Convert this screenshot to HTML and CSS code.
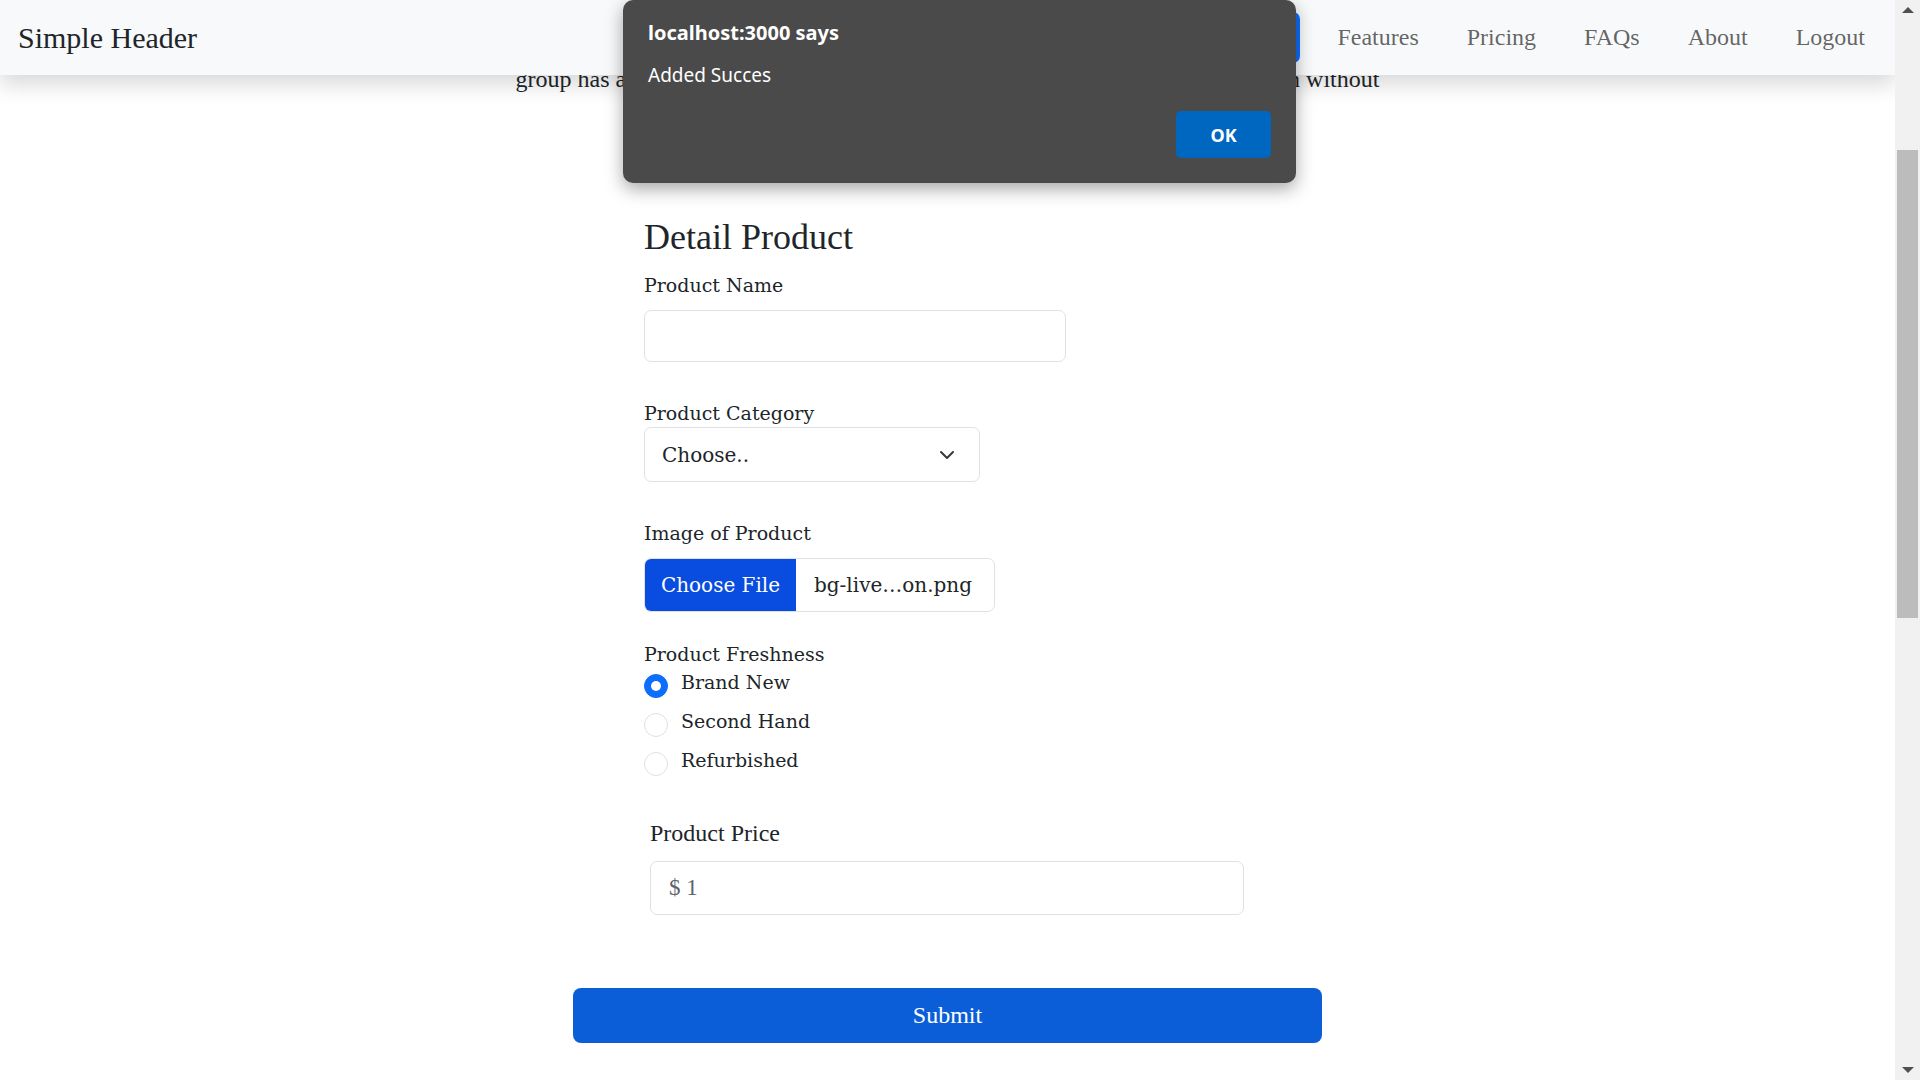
FILE: index.html
```html
<!DOCTYPE html>
<html lang="en">
<head>
<meta charset="utf-8">
<title>Simple Header</title>
<link rel="stylesheet" href="styles.css">
</head>
<body>
<div class="window">
  <div class="viewport">
    <main class="page">
      <p class="lead">group has a high enough contrast ratio so that the whole text is also readable even without</p>
      <form class="form">
        <div class="fields">
          <h4 class="title">Detail Product</h4>
          <label class="label first">Product Name</label>
          <div class="input name-input"></div>

          <label class="label gap">Product Category</label>
          <div class="select">
            <span class="select-text">Choose..</span>
            <svg class="chevron" width="16" height="16" viewBox="0 0 16 16"><path d="M2 5l6 6 6-6" fill="none" stroke="#343a40" stroke-width="2" stroke-linecap="round" stroke-linejoin="round"/></svg>
          </div>

          <label class="label gap">Image of Product</label>
          <div class="file">
            <span class="file-btn">Choose File</span>
            <span class="file-name">bg-live…on.png</span>
          </div>

          <label class="label gap-sm">Product Freshness</label>
          <div class="radios">
            <div class="radio-row"><span class="radio checked"></span><span class="radio-label">Brand New</span></div>
            <div class="radio-row"><span class="radio"></span><span class="radio-label">Second Hand</span></div>
            <div class="radio-row"><span class="radio"></span><span class="radio-label">Refurbished</span></div>
          </div>
        </div>

        <div class="price">
          <label class="price-label">Product Price</label>
          <div class="input price-input"><span class="price-value">$ 1</span></div>
        </div>

        <button type="button" class="submit">Submit</button>
      </form>
    </main>

    <header class="topbar">
      <span class="brand">Simple Header</span>
      <nav class="nav">
        <a class="nav-link active">Home</a>
        <a class="nav-link">Features</a>
        <a class="nav-link">Pricing</a>
        <a class="nav-link">FAQs</a>
        <a class="nav-link">About</a>
        <a class="nav-link">Logout</a>
      </nav>
    </header>

    <div class="dialog">
      <div class="dialog-title">localhost:3000 says</div>
      <div class="dialog-msg">Added Succes</div>
      <div class="dialog-actions"><span class="ok">OK</span></div>
    </div>
  </div>

  <div class="scrollbar">
    <span class="arrow up"></span>
    <div class="track"><div class="thumb"></div></div>
    <span class="arrow down"></span>
  </div>
</div>
</body>
</html>
```

FILE: styles.css
```css
* { box-sizing: border-box; }
html, body { margin: 0; padding: 0; height: 100%; overflow: hidden; }
body { background: #fff; font-family: "Liberation Serif", "Times New Roman", serif; color: #212529; }

.window { display: flex; height: 1080px; width: 1920px; }
.viewport { position: relative; flex: 1; overflow: hidden; background: #fff; }

/* header */
.topbar {
  position: absolute; top: 0; left: 0; right: 0;
  height: 75px;
  background: #f8f9fa;
  box-shadow: 0 10px 20px rgba(0,0,0,0.15);
  display: flex; align-items: center; justify-content: space-between;
  padding: 0 6px 0 18px;
  z-index: 2;
}
.brand { font-size: 30px; color: #212529; }
.nav { display: flex; align-items: center; }
.nav-link {
  font-size: 24px; color: rgba(0,0,0,0.62);
  padding: 0 24px; height: 51px; display: flex; align-items: center;
  border-radius: 7px;
}
.nav-link.active { background: #0d6efd; color: #fff; margin-right: 13px; }

/* page */
.page { padding-top: 61px; }
.lead { margin: 0; font-size: 24px; line-height: 36px; text-align: center; color: #212529; }

.form { width: 749px; margin: 118px auto 0; }
.fields { padding-left: 71px; font-family: "DejaVu Serif", serif; }
.title {
  margin: 0; font-family: "Liberation Serif", serif;
  font-size: 36px; line-height: 44px; font-weight: normal; color: #212529;
}
.label { display: block; font-size: 19px; line-height: 24px; color: #212529; }
.label.first { margin-top: 14px; }
.label.gap { margin-top: 39px; }
.label.gap-sm { margin-top: 30px; }

.input { border: 1px solid #dee2e6; border-radius: 7px; background: #fff; }
.name-input { margin-top: 13px; width: 422px; height: 52px; }

.select {
  margin-top: 2px; width: 336px; height: 55px;
  border: 1px solid #dee2e6; border-radius: 7px;
  display: flex; align-items: center; justify-content: space-between;
  padding: 0 24px 0 17px;
}
.select-text { font-size: 20px; color: #212529; }
.chevron { display: block; }

.file {
  margin-top: 13px; width: 351px; height: 54px;
  border: 1px solid #dee2e6; border-radius: 7px; overflow: hidden;
  display: flex; align-items: center;
}
.file-btn {
  height: 100%; width: 151px; background: #084ce0; color: #fff;
  font-size: 20px; display: flex; align-items: center; justify-content: center;
}
.file-name { margin-left: 18px; font-size: 20px; color: #212529; }

.radios { margin-top: 1px; }
.radio-row { display: flex; height: 39px; }
.radio {
  width: 24px; height: 24px; margin-top: 7px; border-radius: 50%;
  border: 1px solid #dee2e6; background: #fff; flex: none;
}
.radio.checked { background: #0d6efd; border-color: #0d6efd; position: relative; }
.radio.checked::after {
  content: ""; position: absolute; left: 50%; top: 50%;
  width: 10px; height: 10px; margin: -5px 0 0 -5px; border-radius: 50%; background: #fff;
}
.radio-label { margin-left: 13px; font-size: 19px; line-height: 24px; padding-top: 3px; color: #212529; }

.price { padding-left: 77px; margin-top: 34px; }
.price-label { display: block; font-size: 24px; line-height: 30px; color: #212529; }
.price-input { margin-top: 13px; width: 594px; height: 54px; display: flex; align-items: center; padding-left: 18px; }
.price-value { font-size: 23px; color: #5c636a; }

.submit {
  display: block; margin-top: 73px; width: 749px; height: 55px;
  border: 0; border-radius: 8px; background: #0b5ed7; color: #fff;
  font-family: "Liberation Serif", serif; font-size: 24px; padding: 0;
}

/* alert dialog */
.dialog {
  position: absolute; left: 623px; top: 0; width: 673px; height: 183px;
  background: #4a4a4a; border-radius: 10px;
  box-shadow: 0 6px 18px rgba(0,0,0,0.35);
  padding: 20px 25px 0 25px;
  font-family: "Noto Sans", "Open Sans", sans-serif; color: #fff;
  z-index: 3;
  display: flex; flex-direction: column;
}
.dialog-title { font-size: 20px; font-weight: bold; line-height: 26px; }
.dialog-msg { font-size: 19px; line-height: 26px; margin-top: 16px; }
.dialog-actions { display: flex; justify-content: flex-end; margin-top: 23px; }
.ok {
  width: 95px; height: 47px; background: #0067c0; border-radius: 5px;
  display: flex; align-items: center; justify-content: center;
  font-size: 18px; font-weight: bold;
}

/* scrollbar */
.scrollbar { width: 25px; flex: none; background: #f1f1f1; display: flex; flex-direction: column; align-items: center; }
.arrow { width: 0; height: 0; border-left: 6px solid transparent; border-right: 6px solid transparent; flex: none; }
.arrow.up { border-bottom: 6px solid #505050; margin-top: 7px; }
.arrow.down { border-top: 6px solid #505050; margin-bottom: 7px; }
.track { flex: 1; width: 100%; padding-top: 137px; }
.thumb { width: 21px; height: 468px; margin-left: 2px; background: #bcbcbc; }
```
